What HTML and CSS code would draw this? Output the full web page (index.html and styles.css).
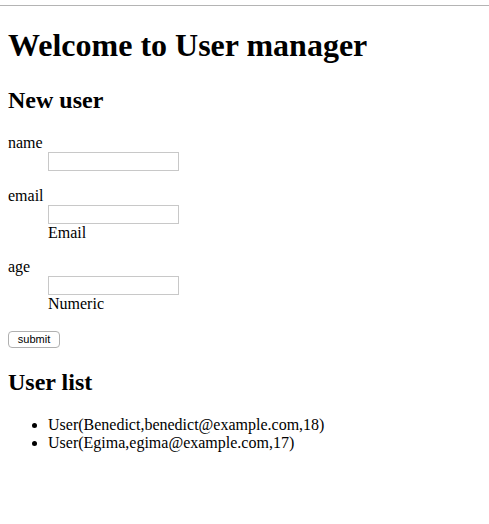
FILE: index.html
```
<!DOCTYPE html>
<html>
<head>
<meta charset="utf-8">
<link rel="stylesheet" href="styles.css">
</head>
<body>
<div class="topline"></div>
<div class="page">
<h1>Welcome to User manager</h1>
<h2>New user</h2>
<form>
<dl class="field"><dt><label for="name">name</label></dt><dd><input type="text" id="name" class="txt"></dd></dl>
<dl class="field"><dt><label for="email">email</label></dt><dd><input type="text" id="email" class="txt"></dd><dd class="info">Email</dd></dl>
<dl class="field"><dt><label for="age">age</label></dt><dd><input type="text" id="age" class="txt"></dd><dd class="info">Numeric</dd></dl>
<button type="button" class="btn">submit</button>
</form>
<h2>User list</h2>
<ul class="list">
<li>User(Benedict,benedict@example.com,18)</li>
<li>User(Egima,egima@example.com,17)</li>
</ul>
</div>
</body>
</html>
```
FILE: styles.css
```
html, body { margin: 0; padding: 0; background: #fff; }
body { font-family: "Liberation Serif", "Times New Roman", serif; font-size: 16px; color: #000; }
.topline { height: 1px; background: #b4b4b4; margin-top: 5px; }
.page { padding: 0 8px; overflow: hidden; }
h1 { font-size: 32px; font-weight: bold; margin: 21px 0 23px; }
h2 { font-size: 24px; font-weight: bold; margin: 20px 0; }
.field { margin: 16px 0; line-height: 18px; }
.field dt { margin: 0; }
.field dd { margin: 0 0 0 40px; }
.txt { box-sizing: border-box; width: 131px; height: 19px; border: 1px solid #c8c8c8; padding: 0 2px; margin: 0; font-size: 13px; background: #fff; display: block; }
.btn { display: block; box-sizing: border-box; font-family: "Liberation Sans", Arial, sans-serif; font-size: 11px; line-height: 13px; border: 1px solid #b0b0b0; border-radius: 4px; background: #fff; padding: 1px 8px; width: 52px; height: 17px; margin: 18px 0 21px; color: #000; text-align: center; }
.list { margin: 16px 0; padding-left: 40px; }
```
